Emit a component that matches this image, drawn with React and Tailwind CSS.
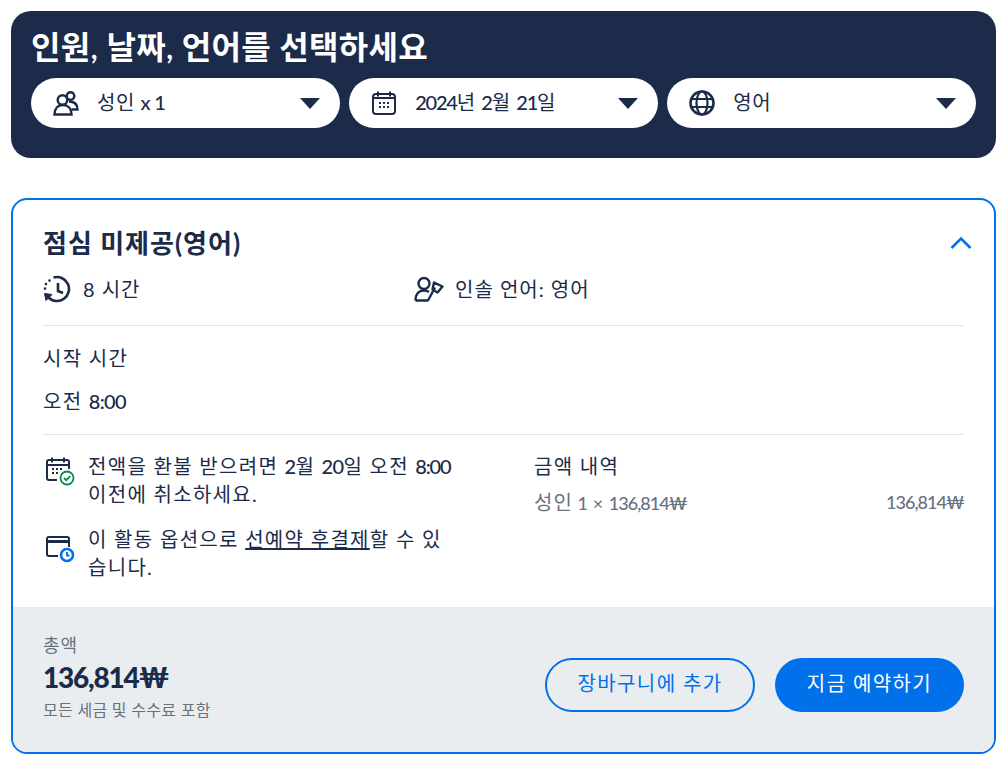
import React from 'react';

const font = 'font-["Lato","Noto_Sans_CJK_KR",sans-serif]';

// latin runs sit tighter than the korean around them
function Num({ children, className = 'tracking-[-0.7px]' }) {
  return <span className={`font-medium ${className}`}>{children}</span>;
}

function Caret() {
  return (
    <svg width="20" height="11" viewBox="0 0 20 11" className="shrink-0">
      <path d="M0 0h20L10 11z" fill="#1b2b49" />
    </svg>
  );
}

function UsersIcon() {
  return (
    <svg width="26" height="26" viewBox="0 0 26 26" fill="none" stroke="#1b2b49" strokeWidth="2.5">
      <circle cx="9.500" cy="10" r="4.800" />
      <circle cx="17.500" cy="6" r="3.800" />
      <path d="M1.500 24.500c0-6 3.500-9.500 8.500-9.500s8.500 3.500 8.500 9.500z" />
      <path d="M16 11.500c5 0 8.500 2.500 8.500 8h-6" />
    </svg>
  );
}

function CalendarIcon() {
  return (
    <svg width="26" height="26" viewBox="0 0 26 26" fill="none">
      <rect x="2" y="4" width="22" height="20" rx="3" stroke="#1b2b49" strokeWidth="2" />
      <path d="M2 8h22M7 1.500v5M19 1.500v5" stroke="#1b2b49" strokeWidth="2" />
      <g fill="#1b2b49">
        <rect x="8" y="12" width="2" height="2" />
        <rect x="12" y="12" width="2" height="2" />
        <rect x="16" y="12" width="2" height="2" />
        <rect x="8" y="16" width="2" height="2" />
        <rect x="12" y="16" width="2" height="2" />
        <rect x="16" y="16" width="2" height="2" />
      </g>
    </svg>
  );
}

function GlobeIcon() {
  return (
    <svg width="26" height="26" viewBox="0 0 26 26" fill="none" stroke="#1b2b49" strokeWidth="2.200">
      <circle cx="13" cy="13" r="11.500" strokeWidth="2.600" />
      <ellipse cx="13" cy="13" rx="5.500" ry="11.500" />
      <path d="M2.500 9h21M2.500 17h21" />
    </svg>
  );
}

function HistoryIcon() {
  return (
    <svg width="28" height="28" viewBox="0 0 28 28" fill="none" stroke="#1b2b49">
      <path d="M10.500 2.500A12 12 0 1 1 5.500 22.500" strokeWidth="2.600" />
      <path d="M15 8v8l5 2" strokeWidth="2.600" />
      <path d="M1.500 18.500l7.500 1-6 6z" fill="#1b2b49" strokeWidth="1" />
      <path d="M2 13.500v.1M3 9v.1M6.500 5.500v.1" strokeWidth="2.600" strokeLinecap="round" />
    </svg>
  );
}

function GuideIcon() {
  return (
    <svg width="30" height="26" viewBox="0 0 30 26" fill="none" stroke="#1b2b49" strokeWidth="2.400">
      <circle cx="10" cy="7.500" r="5.500" />
      <path d="M1.500 24.500c0-6.500 3.500-10 8.500-10 2 0 3.600.5 5 1.500M1.500 24.500h13" />
      <path d="M14 24.500l7-13" />
      <path d="M20 6.500l8.500 4-5 6-5-3z" strokeLinejoin="round" />
    </svg>
  );
}

function RefundIcon() {
  return (
    <svg width="30" height="30" viewBox="0 0 30 30" fill="none" className="mt-[4px] ml-[2px] shrink-0">
      <path d="M12 24H4a2 2 0 0 1-2-2V6a2 2 0 0 1 2-2h18a2 2 0 0 1 2 2v7" stroke="#1b2b49" strokeWidth="2" />
      <path d="M2 9h22M7 1.500v5M19 1.500v5" stroke="#1b2b49" strokeWidth="2" />
      <g fill="#1b2b49">
        <rect x="7" y="12" width="2" height="2" />
        <rect x="11" y="12" width="2" height="2" />
        <rect x="15" y="12" width="2" height="2" />
        <rect x="7" y="16" width="2" height="2" />
        <rect x="11" y="16" width="2" height="2" />
      </g>
      <circle cx="22" cy="22" r="6.500" fill="#fff" stroke="#0a8a4f" strokeWidth="1.800" />
      <path d="M19 22l2.200 2.200 4-4" stroke="#0a8a4f" strokeWidth="1.800" />
    </svg>
  );
}

function PayLaterIcon() {
  return (
    <svg width="30" height="30" viewBox="0 0 30 30" fill="none" className="mt-[8px] ml-[2px] shrink-0">
      <path d="M13 23H4a2 2 0 0 1-2-2V6a2 2 0 0 1 2-2h18a2 2 0 0 1 2 2v8" stroke="#1b2b49" strokeWidth="2" />
      <path d="M2 8.500h22" stroke="#1b2b49" strokeWidth="3" />
      <circle cx="22" cy="22" r="6" fill="#fff" stroke="#0071eb" strokeWidth="2.500" />
      <path d="M22 19v3.500h2.500" stroke="#0071eb" strokeWidth="1.800" />
    </svg>
  );
}

function Picker({ icon, children }) {
  return (
    <div className="flex h-[50px] flex-1 items-center rounded-full bg-white pl-[22px] pr-[20px]">
      {icon}
      <span className="ml-[18px] flex-1 pb-[2px] text-[20px] leading-[44px] tracking-[0.5px] text-[#1b2b49]">{children}</span>
      <Caret />
    </div>
  );
}

export default function App() {
  return (
    <div className={`${font} min-h-[764px] bg-white pl-[11px] pr-[7px] pt-[11px] text-[#1b2b49]`}>
      <section className="h-[147px] rounded-[20px] bg-[#1b2b49] px-[20px] pt-[15px]">
        <h1 className="text-[32px] font-semibold leading-[42px] tracking-[0.3px] text-white">인원, 날짜, 언어를 선택하세요</h1>
        <div className="mt-[10px] flex gap-[9.5px]">
          <Picker icon={<UsersIcon />}>성인 <Num>x 1</Num></Picker>
          <Picker icon={<CalendarIcon />}>
            <Num className="tracking-[-1.2px]">2024</Num>년 <Num className="tracking-[-1.2px]">2</Num>월 <Num className="tracking-[-1.2px]">21</Num>일
          </Picker>
          <Picker icon={<GlobeIcon />}>영어</Picker>
        </div>
      </section>

      <section className="mt-[40px] overflow-hidden rounded-[16px] border-2 border-[#0071eb]">
        <div className="px-[30px] pt-[26px]">
          <div className="flex items-center justify-between">
            <h2 className="text-[26px] font-bold leading-[34px] tracking-[1px]">점심 미제공(영어)</h2>
            <svg width="22" height="14" viewBox="0 0 22 14" fill="none" className="mr-[-8px]">
              <path d="M1.500 12L11 2.500 20.500 12" stroke="#0071eb" strokeWidth="2.500" />
            </svg>
          </div>
          <div className="mt-[14px] flex h-[30px] items-center text-[20px] tracking-[1px]">
            <div className="flex w-[371px] items-center gap-[12px]">
              <HistoryIcon />
              <span>8 시간</span>
            </div>
            <div className="flex items-center gap-[11px]">
              <GuideIcon />
              <span>인솔 언어: 영어</span>
            </div>
          </div>
          <div className="mt-[21px] border-t border-[#e0e3e8]" />
          <p className="mt-[16px] text-[20px] leading-[32px] tracking-[1.300px]">시작 시간</p>
          <p className="mt-[11px] text-[20px] leading-[32px] tracking-[1.300px]">오전 <Num>8:00</Num></p>
          <div className="mt-[17px] border-t border-[#e0e3e8]" />
          <div className="mt-[17px] flex h-[155px] tracking-[1.300px]">
            <div className="w-[491px]">
              <div className="flex gap-[13px]">
                <RefundIcon />
                <p className="w-[366px] text-[20px] leading-[28px] break-all">전액을 환불 받으려면 <Num>2</Num>월 <Num>20</Num>일 오전 <Num className="tracking-[-1.2px]">8:00</Num> 이전에 취소하세요.</p>
              </div>
              <div className="mt-[17px] flex gap-[13px]">
                <PayLaterIcon />
                <p className="w-[366px] text-[20px] leading-[28px] break-all">
                  이 활동 옵션으로 <span className="underline">선예약 후결제</span>할 수 있습니다.
                </p>
              </div>
            </div>
            <div className="flex-1">
              <p className="text-[20px] leading-[28px]">금액 내역</p>
              <div className="mt-[8px] flex justify-between text-[18px] leading-[28px] tracking-[0px] text-[#68727f]">
                <span><span className="text-[20px] tracking-[1px]">성인</span> <Num>1</Num> <span className="px-[1px]">×</span> <Num className="tracking-[-1px]">136,814₩</Num></span>
                <Num className="tracking-[-1px]">136,814₩</Num>
              </div>
            </div>
          </div>
        </div>
        <div className="flex h-[145px] items-start justify-between bg-[#e9edf0] px-[30px] pt-[25px]">
          <div>
            <p className="text-[18px] leading-[26px] tracking-[1px] text-[#68727f]">총액</p>
            <p className="text-[28px] font-black leading-[38px] tracking-[-1.200px]">136,814₩</p>
            <p className="mt-[4px] text-[16px] leading-[20px] tracking-[0.300px] text-[#68727f]">모든 세금 및 수수료 포함</p>
          </div>
          <div className="mt-[26px] flex gap-[20px]">
            <button className="h-[54px] w-[210px] rounded-full border-2 border-[#0071eb] pb-[4px] text-[20px] tracking-[1.400px] text-[#0071eb]">장바구니에 추가</button>
            <button className="h-[54px] w-[189px] rounded-full bg-[#0071eb] pb-[4px] text-[20px] tracking-[1.400px] text-white">지금 예약하기</button>
          </div>
        </div>
      </section>
    </div>
  );
}
